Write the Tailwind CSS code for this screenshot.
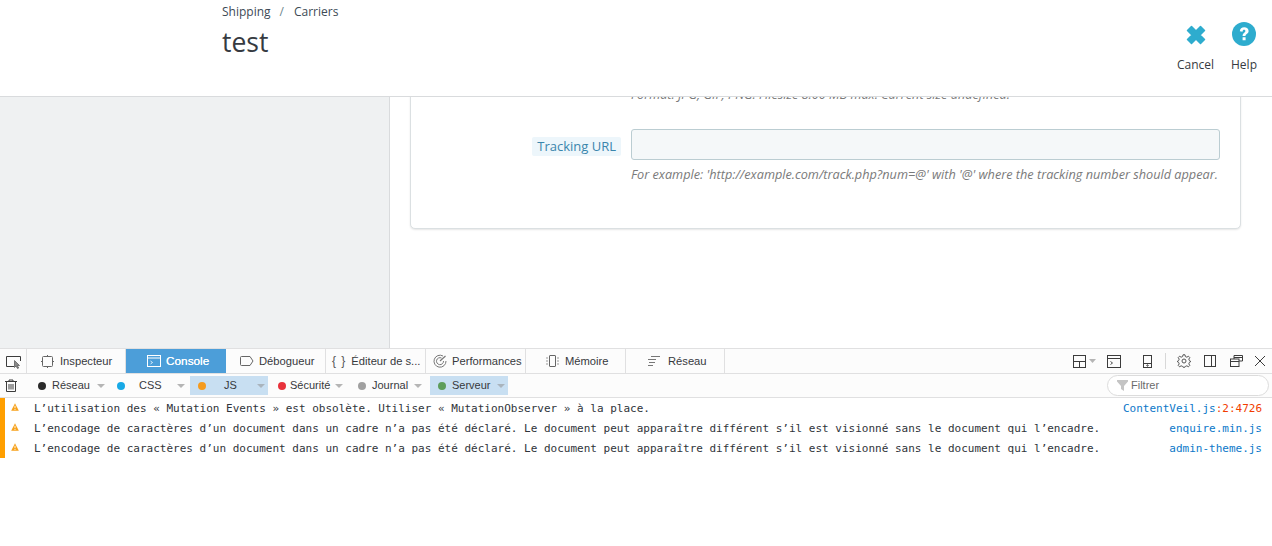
<!DOCTYPE html>
<html lang="fr">
<head>
<meta charset="utf-8">
<script src="https://cdn.jsdelivr.net/npm/@tailwindcss/browser@4"></script>
</head>
<body class="w-[1272px] h-[546px] overflow-hidden bg-white flex flex-col">
<!-- admin page -->
<div class="h-[348px] flex flex-col shrink-0 font-['Open_Sans',sans-serif]">
  <header class="h-[97px] shrink-0 border-b border-[#d9dbdd] bg-white flex justify-between relative z-10">
    <div class="pl-[222px] pt-[4px]">
      <div class="text-[12px] leading-[16px] text-[#3d4a55] flex"><span>Shipping</span><span class="ml-[9px] text-[#6c868e]">/</span><span class="ml-[10px]">Carriers</span></div>
      <h1 class="text-[26.5px] leading-[36px] mt-[4px] text-[#363a41] font-normal">test</h1>
    </div>
    <div class="flex pr-[15px] pt-[22px] gap-[17px] text-[12px] text-[#363a41]">
      <div class="flex flex-col items-center w-[37px]">
        <svg width="24" height="24" viewBox="0 0 24 24" class="mt-[1px]"><path d="M3.5 7.5 L7.5 3.5 L12 8 L16.5 3.5 L20.5 7.5 L16 12 L20.5 16.5 L16.5 20.5 L12 16 L7.5 20.5 L3.5 16.5 L8 12 Z" fill="#2eacce" stroke="#2eacce" stroke-width="1.5" stroke-linejoin="round"/></svg>
        <span class="mt-[10px] leading-[16px]">Cancel</span>
      </div>
      <div class="flex flex-col items-center w-[26px]">
        <svg width="24" height="24" viewBox="0 0 24 24"><circle cx="12" cy="12" r="12" fill="#2eacce"/><path d="M7.8 9.2 C8 6.6 9.8 5.2 12.2 5.2 C14.8 5.2 16.6 6.8 16.6 8.9 C16.6 11.6 13.5 11.8 13.5 14 L10.6 14 C10.6 10.8 13.4 10.6 13.4 9 C13.4 8.2 12.8 7.8 12 7.8 C11.2 7.8 10.7 8.4 10.5 9.8 Z M10.6 15.2 H13.6 V18.2 H10.6 Z" fill="#fff"/></svg>
        <span class="mt-[11px] leading-[16px]">Help</span>
      </div>
    </div>
  </header>
  <div class="flex-1 flex overflow-hidden">
    <aside class="w-[390px] shrink-0 bg-[#eff1f2] border-r border-[#d9dbdd]"></aside>
    <main class="flex-1 pl-[20px] pr-[31px] bg-white">
      <section class="mt-[-12px] h-[144px] w-[831px] border border-[#dbe0e2] rounded-[5px] shadow-[0_1px_2px_rgba(0,0,0,0.1)] bg-white relative">
        <p class="ml-[220px] text-[12.65px] leading-[16px] italic text-[#7a7a7a] whitespace-nowrap">Format: JPG, GIF, PNG. Filesize 8.00 MB max. Current size undefined.</p>
        <div class="mt-[27px] flex">
          <div class="w-[220px] shrink-0 flex justify-end items-center pr-[10px]">
            <label class="mt-[4px] bg-[#edf6fb] text-[#3a85ac] text-[13px] leading-[19px] px-[5px] rounded-[2px]">Tracking URL</label>
          </div>
          <div class="w-[589px] h-[31px] border border-[#bbcdd2] rounded-[3px] bg-[#f5f8f9]"></div>
        </div>
        <p class="ml-[220px] mt-[5px] text-[12.7px] leading-[18px] italic text-[#7a7a7a] whitespace-nowrap">For example: 'http://example.com/track.php?num=@' with '@' where the tracking number should appear.</p>
      </section>
    </main>
  </div>
</div>
<!-- devtools -->
<div class="flex-1 flex flex-col font-['Liberation_Sans',sans-serif] text-[11px] text-[#37393c] bg-white">
  <div class="h-[26px] shrink-0 flex items-stretch bg-[#fcfcfc] border-t border-b border-[#e0e0e1] text-[11.2px]">
    <div class="w-[27px] flex items-center justify-center border-r border-[#e0e0e1]">
      <svg width="17" height="15" viewBox="0 0 17 15" fill="none" stroke="#3c3c3c"><path d="M9 12.5H1.5V2.5H15.5V7"/><path d="M9.5 6.5L9.5 13.5L11 12L12.5 14.5L13.7 14L12.3 11.5L14.5 11.5Z" fill="#888" stroke="#555" stroke-width=".7"/></svg>
    </div>
    <div class="w-[99px] flex items-center border-r border-[#e0e0e1] pl-[14px] gap-[6px]">
      <svg width="13" height="13" viewBox="0 0 13 13" fill="none" stroke="#666"><rect x="1.5" y="1.5" width="10" height="10" rx="1"/><path d="M6.5 0V1.5M6.5 11.5V13M0 6.5H1.5M11.5 6.5H13"/></svg>
      <span>Inspecteur</span>
    </div>
    <div class="w-[100px] flex items-center bg-[#4c9ed9] text-white pl-[21px] gap-[5px]">
      <svg width="14" height="12" viewBox="0 0 14 12" fill="none" stroke="#fff"><rect x=".5" y=".5" width="13" height="11"/><path d="M1 3H13" /><path d="M3.5 6L5.5 7.5L3.5 9" stroke-width=".8"/></svg>
      <span class="mt-[1px] text-[11.8px] [text-shadow:0_0_0.6px_#fff]">Console</span>
    </div>
    <div class="w-[100px] flex items-center border-r border-[#e0e0e1] pl-[14px] gap-[5px]">
      <svg width="14" height="10" viewBox="0 0 14 10" fill="none" stroke="#666"><path d="M1.5 .5H10L13 5L10 9.5H1.5Q.5 9.5 .5 8.5V1.5Q.5 .5 1.5 .5Z"/></svg>
      <span>Débogueur</span>
    </div>
    <div class="w-[100px] flex items-center border-r border-[#e0e0e1] pl-[6px] gap-[5px] whitespace-nowrap">
      <span class="text-[12px] tracking-[1px] text-[#555]">{ }</span><span>Éditeur de s...</span>
    </div>
    <div class="w-[100px] flex items-center border-r border-[#e0e0e1] pl-[7px] gap-[5px]">
      <svg width="14" height="14" viewBox="0 0 14 14" fill="none" stroke="#777"><path d="M10 2A6 6 0 1 0 13 7"/><path d="M8.5 4A3.5 3.5 0 1 0 10.5 7"/><path d="M7 7L12.5 2" stroke-width="1.2"/></svg>
      <span>Performances</span>
    </div>
    <div class="w-[100px] flex items-center border-r border-[#e0e0e1] pl-[19px] gap-[5px]">
      <svg width="15" height="12" viewBox="0 0 15 12" fill="none" stroke="#666"><rect x="4.5" y=".5" width="6" height="11" rx=".5"/><path d="M1 3H3M1 6H3M1 9H3M12 3H14M12 6H14M12 9H14" stroke="#999"/></svg>
      <span>Mémoire</span>
    </div>
    <div class="w-[99px] flex items-center border-r border-[#e0e0e1] pl-[22px] gap-[8px]">
      <svg width="12" height="10" viewBox="0 0 12 10" fill="none" stroke="#777"><path d="M3 .5H12M0 3.5H8M1 6.5H7M0 9.5H5"/></svg>
      <span>Réseau</span>
    </div>
    <div class="flex-1 flex items-center justify-end pr-[7px]">
      <svg width="13" height="13" viewBox="0 0 13 13" fill="none" stroke="#3c3c3c" class="mr-[3px]"><rect x=".5" y=".5" width="12" height="12"/><path d="M.5 6.5H12.5M6.5 6.5V12.5"/></svg>
      <svg width="7" height="4" viewBox="0 0 7 4" class="mr-[11px]"><path d="M0 0H7L3.5 4Z" fill="#b5b5b5"/></svg>
      <svg width="14" height="13" viewBox="0 0 14 13" fill="none" stroke="#3c3c3c" class="mr-[22px]"><rect x=".5" y=".5" width="13" height="12"/><path d="M.5 3.5H13.5"/><path d="M3.5 6.5L5.5 8L3.5 9.5" stroke-width=".9"/></svg>
      <svg width="9" height="13" viewBox="0 0 9 13" fill="none" stroke="#3c3c3c" class="mr-[13px]"><rect x=".5" y=".5" width="8" height="12"/><path d="M.5 8.5H8.5"/><circle cx="4.5" cy="10.5" r=".7"/></svg>
      <div class="w-px h-[16px] bg-[#d8d8d8] mr-[11px]"></div>
      <svg width="14" height="14" viewBox="0 0 14 14" fill="none" stroke="#555" class="mr-[13px]"><circle cx="7" cy="7" r="2"/><path d="M6 .8H8L8.4 2.6L9.9 3.2L11.4 2.2L12.8 3.6L11.8 5.1L12.4 6.6L13.4 7V8L12.4 8.4L11.8 9.9L12.8 11.4L11.4 12.8L9.9 11.8L8.4 12.4L8 13.2H6L5.6 12.4L4.1 11.8L2.6 12.8L1.2 11.4L2.2 9.9L1.6 8.4L.6 8V7L1.6 6.6L2.2 5.1L1.2 3.6L2.6 2.2L4.1 3.2L5.6 2.6Z"/></svg>
      <svg width="12" height="12" viewBox="0 0 12 12" fill="none" stroke="#3c3c3c" class="mr-[14px]"><rect x=".5" y=".5" width="11" height="11"/><path d="M7.5 .5V11.5"/></svg>
      <svg width="13" height="12" viewBox="0 0 13 12" fill="none" stroke="#3c3c3c" class="mr-[12px]"><path d="M4 4V.5H12.5V6H9"/><rect x=".5" y="4" width="8.5" height="7.5"/><path d="M.5 6.5H9M4 2.5H12.5"/></svg>
      <svg width="10" height="10" viewBox="0 0 10 10" fill="none" stroke="#3c3c3c"><path d="M0 0L10 10M10 0L0 10"/></svg>
    </div>
  </div>
  <div class="h-[24px] shrink-0 flex items-center bg-[#fcfcfc] border-b border-[#e0e0e1] relative">
    <div class="w-[26px] shrink-0 pl-[5px] flex items-center">
      <svg width="12" height="13" viewBox="0 0 12 13" fill="none" stroke="#3c3c3c"><path d="M0 2.5H12M4 2.5V1H8V2.5"/><path d="M1.5 2.5V12.5H10.5V2.5M4 5V10.5M6 5V10.5M8 5V10.5"/></svg>
    </div>
    <div class="flex items-stretch h-[19px]">
      <div class="w-[85px] shrink-0 flex items-center pl-[12px] gap-[6px]"><span class="w-[8px] h-[8px] shrink-0 rounded-full bg-[#2a2a2a]"></span><span>Réseau</span><span class="ml-[1px] w-0 h-0 border-x-[4px] border-x-transparent border-t-[4px] border-t-[#b5b5b5]"></span></div>
      <div class="w-[79px] shrink-0 flex items-center pl-[6px]"><span class="w-[8px] h-[8px] shrink-0 rounded-full bg-[#18a9e6]"></span><span class="ml-[14px]">CSS</span><span class="ml-[15px] w-0 h-0 border-x-[4px] border-x-transparent border-t-[4px] border-t-[#b5b5b5]"></span></div>
      <div class="w-[78px] shrink-0 flex items-center pl-[8px] bg-[#c8dff2]"><span class="w-[8px] h-[8px] shrink-0 rounded-full bg-[#f59b1e]"></span><span class="ml-[18px]">JS</span><span class="ml-[20px] w-0 h-0 border-x-[4px] border-x-transparent border-t-[4px] border-t-[#a9b4bd]"></span></div>
      <div class="w-[80px] shrink-0 flex items-center pl-[10px] gap-[4px]"><span class="w-[8px] h-[8px] shrink-0 rounded-full bg-[#e8323c]"></span><span>Sécurité</span><span class="ml-[1px] w-0 h-0 border-x-[4px] border-x-transparent border-t-[4px] border-t-[#b5b5b5]"></span></div>
      <div class="w-[82px] shrink-0 flex items-center pl-[10px] gap-[6px]"><span class="w-[8px] h-[8px] shrink-0 rounded-full bg-[#a0a0a0]"></span><span>Journal</span><span class="w-0 h-0 border-x-[4px] border-x-transparent border-t-[4px] border-t-[#b5b5b5]"></span></div>
      <div class="w-[78px] shrink-0 flex items-center pl-[8px] gap-[6px] bg-[#c8dff2]"><span class="w-[8px] h-[8px] shrink-0 rounded-full bg-[#5d9d5a]"></span><span>Serveur</span><span class="w-0 h-0 border-x-[4px] border-x-transparent border-t-[4px] border-t-[#a9b4bd]"></span></div>
    </div>
    <div class="absolute left-[1107px] top-[1px] w-[162px] h-[21px] rounded-full border border-[#dcdcdc] bg-white flex items-center pl-[9px] gap-[3px] text-[#6b6b6b]">
      <svg width="11" height="11" viewBox="0 0 11 11" fill="#c4c4c4"><path d="M0 0H11V1.5L7 6V11L4 9V6L0 1.5Z"/></svg>
      <span>Filtrer</span>
    </div>
  </div>
  <div class="font-['DejaVu_Sans_Mono',monospace] text-[11px] leading-[20px] text-[#30343a]">
    <div class="h-[20px] flex items-center border-l-[5px] border-[#ff9f00] pr-[10px]">
      <svg width="8" height="8" viewBox="0 0 9 9" class="ml-[6px] mb-[2px] shrink-0"><path d="M4.5 .3L8.8 8.6H.2Z" fill="#f7a11a"/><path d="M4 3H5V6H4ZM4 6.8H5V7.8H4Z" fill="#fff"/></svg>
      <span class="ml-[15px] mt-[2px] whitespace-nowrap">L’utilisation des « Mutation Events » est obsolète. Utiliser « MutationObserver » à la place.</span>
      <span class="ml-auto mt-[2px] whitespace-nowrap text-[#0b78c9]">ContentVeil.js<span class="text-[#f13c00]">:2:4726</span></span>
    </div>
    <div class="h-[20px] flex items-center border-l-[5px] border-[#ff9f00] pr-[10px]">
      <svg width="8" height="8" viewBox="0 0 9 9" class="ml-[6px] mb-[2px] shrink-0"><path d="M4.5 .3L8.8 8.6H.2Z" fill="#f7a11a"/><path d="M4 3H5V6H4ZM4 6.8H5V7.8H4Z" fill="#fff"/></svg>
      <span class="ml-[15px] mt-[2px] whitespace-nowrap">L’encodage de caractères d’un document dans un cadre n’a pas été déclaré. Le document peut apparaître différent s’il est visionné sans le document qui l’encadre.</span>
      <span class="ml-auto mt-[2px] whitespace-nowrap text-[#0b78c9]">enquire.min.js</span>
    </div>
    <div class="h-[20px] flex items-center border-l-[5px] border-[#ff9f00] pr-[10px]">
      <svg width="8" height="8" viewBox="0 0 9 9" class="ml-[6px] mb-[2px] shrink-0"><path d="M4.5 .3L8.8 8.6H.2Z" fill="#f7a11a"/><path d="M4 3H5V6H4ZM4 6.8H5V7.8H4Z" fill="#fff"/></svg>
      <span class="ml-[15px] mt-[2px] whitespace-nowrap">L’encodage de caractères d’un document dans un cadre n’a pas été déclaré. Le document peut apparaître différent s’il est visionné sans le document qui l’encadre.</span>
      <span class="ml-auto mt-[2px] whitespace-nowrap text-[#0b78c9]">admin-theme.js</span>
    </div>
  </div>
</div>
</body>
</html>
